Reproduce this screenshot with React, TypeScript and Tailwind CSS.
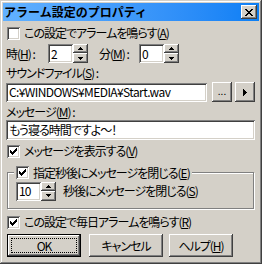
const raised =
  "shadow-[inset_-1px_-1px_#404040,inset_1px_1px_#ffffff,inset_-2px_-2px_#808080,inset_2px_2px_#d4d0c8]";
const sunken =
  "shadow-[inset_1px_1px_#808080,inset_-1px_-1px_#ffffff,inset_2px_2px_#404040,inset_-2px_-2px_#d4d0c8]";

function Check({ checked }: { checked?: boolean }) {
  const ys = [2, 3, 4, 3, 2, 1, 0];
  return (
    <span className={`w-[13px] h-[13px] bg-white ${sunken} flex items-center justify-center shrink-0`}>
      {checked && (
        <svg width="7" height="7" viewBox="0 0 7 7" shapeRendering="crispEdges">
          {ys.map((y, i) => (
            <rect key={i} x={i} y={y} width="1" height="3" fill="#000" />
          ))}
        </svg>
      )}
    </span>
  );
}

function Spin() {
  return (
    <div className="flex flex-col w-[15px] h-[19px] shrink-0">
      <div className={`h-[9px] bg-[#d4d0c8] ${raised} flex items-center justify-center`}>
        <svg width="5" height="3" viewBox="0 0 5 3" shapeRendering="crispEdges">
          <rect x="2" y="0" width="1" height="1" />
          <rect x="1" y="1" width="3" height="1" />
          <rect x="0" y="2" width="5" height="1" />
        </svg>
      </div>
      <div className={`h-[10px] bg-[#d4d0c8] ${raised} flex items-center justify-center`}>
        <svg width="5" height="3" viewBox="0 0 5 3" shapeRendering="crispEdges">
          <rect x="0" y="0" width="5" height="1" />
          <rect x="1" y="1" width="3" height="1" />
          <rect x="2" y="2" width="1" height="1" />
        </svg>
      </div>
    </div>
  );
}

function Field({ value, className }: { value: string; className: string }) {
  return (
    <div className={`bg-white ${sunken} flex items-center pl-[3px] overflow-hidden whitespace-nowrap shrink-0 ${className}`}>
      {value}
    </div>
  );
}

function Button({ children, className, def }: { children: React.ReactNode; className: string; def?: boolean }) {
  if (def) {
    return (
      <div className={`border border-black shrink-0 ${className}`}>
        <div className={`w-full h-full bg-[#d4d0c8] ${raised} p-[3px]`}>
          <div className="w-full h-full border border-dotted border-black flex items-center justify-center">
            {children}
          </div>
        </div>
      </div>
    );
  }
  return (
    <div className={`bg-[#d4d0c8] ${raised} flex items-center justify-center shrink-0 ${className}`}>
      {children}
    </div>
  );
}

export default function App() {
  return (
    <div
      className={`w-[262px] h-[264px] bg-[#d4d0c8] p-[3px] flex flex-col text-[12px] leading-none text-black font-['Noto_Sans_CJK_JP',sans-serif] [font-feature-settings:'palt'] tracking-[-1px] shadow-[inset_-1px_-1px_#404040,inset_1px_1px_#d4d0c8,inset_-2px_-2px_#808080,inset_2px_2px_#ffffff]`}
    >
      {/* title bar */}
      <div className="h-[18px] bg-gradient-to-r from-[#62b1ff] to-[#0a7ff5] flex items-center pl-[1px] pr-[2px] shrink-0 tracking-normal">
        <span className="flex-1 font-bold text-[12px] [font-feature-settings:normal]">アラーム設定のプロパティ</span>
        <div className={`w-[16px] h-[14px] bg-[#d4d0c8] ${raised} flex items-center justify-center`}>
          <svg width="8" height="7" viewBox="0 0 8 7" shapeRendering="crispEdges">
            <path d="M0 0h2v1h-2zM6 0h2v1h-2zM1 1h2v1h-2zM5 1h2v1h-2zM2 2h4v1h-4zM3 3h2v1h-2zM2 4h4v1h-4zM1 5h2v1h-2zM5 5h2v1h-2zM0 6h2v1h-2zM6 6h2v1h-2z" fill="#000" />
          </svg>
        </div>
      </div>

      <div className="flex flex-col px-[3px]">
        <div className="h-[3px]" />
        <div className="h-[18px] flex items-center pl-[1px] gap-[4px]">
          <Check />
          <span>
            この設定でアラームを鳴らす(<span className="underline">A</span>)
          </span>
        </div>

        <div className="h-[2px]" />
        <div className="h-[19px] flex items-center">
          <span className="w-[42px]">
            時(<span className="underline">H</span>) :
          </span>
          <Field value="2" className="w-[25px] h-[19px]" />
          <Spin />
          <span className="w-[40px] ml-[11px]">
            分(<span className="underline">M</span>) :
          </span>
          <Field value="0" className="w-[25px] h-[19px]" />
          <Spin />
        </div>

        <div className="h-[3px]" />
        <div className="h-[14px] flex items-center">
          サウンドファイル(<span className="underline">S</span>) :
        </div>

        <div className="h-[2px]" />
        <div className="h-[20px] flex items-center">
          <Field value="C:¥WINDOWS¥MEDIA¥Start.wav" className="w-[201px] h-[19px] tracking-[-0.6px]" />
          <Button className="w-[20px] h-[20px] ml-[5px]">
            <span className="text-[10px] -mt-[3px] tracking-normal">...</span>
          </Button>
          <Button className="w-[20px] h-[20px] ml-[3px]">
            <svg width="4" height="7" viewBox="0 0 4 7" shapeRendering="crispEdges">
              <path d="M0 0h1v7h-1zM1 1h1v5h-1zM2 2h1v3h-1zM3 3h1v1h-1z" fill="#000" />
            </svg>
          </Button>
        </div>

        <div className="h-[3px]" />
        <div className="h-[14px] flex items-center">
          メッセージ(<span className="underline">M</span>) :
        </div>

        <div className="h-[1px]" />
        <Field value="もう寝る時間ですよ～！" className="w-[249px] h-[20px]" />

        <div className="h-[2px]" />
        <div className="h-[18px] flex items-center pl-[1px] gap-[4px]">
          <Check checked />
          <span>
            メッセージを表示する(<span className="underline">V</span>)
          </span>
        </div>

        <div className="h-[6px]" />
        <fieldset className="ml-[1px] w-[247px] border border-[#808080] shadow-[inset_1px_1px_#ffffff,1px_1px_#ffffff] pl-[6px] pb-[7px]">
          <legend className="h-[13px] px-[2px] bg-[#d4d0c8]">
            <span className="flex items-center gap-[4px] h-[13px]">
              <Check checked />
              <span>
                指定秒後にメッセージを閉じる(<span className="underline">E</span>)
              </span>
            </span>
          </legend>
          <div className="h-[2px]" />
          <div className="h-[20px] flex items-center ml-[2px]">
            <Field value="10" className="w-[25px] h-[19px]" />
            <Spin />
            <span className="ml-[7px]">
              秒後にメッセージを閉じる(<span className="underline">S</span>)
            </span>
          </div>
        </fieldset>

        <div className="h-[4px]" />
        <div className="h-[18px] flex items-center pl-[1px] gap-[4px]">
          <Check checked />
          <span>
            この設定で毎日アラームを鳴らす(<span className="underline">R</span>)
          </span>
        </div>

        <div className="h-[3px]" />
        <div className="h-[23px] flex items-center">
          <Button def className="w-[74px] h-[23px] ml-[1px]">
            OK
          </Button>
          <Button className="w-[74px] h-[23px] ml-[8px]">キャンセル</Button>
          <Button className="w-[64px] h-[23px] ml-[6px]">
            ヘルプ(<span className="underline">H</span>)
          </Button>
        </div>
      </div>
    </div>
  );
}
